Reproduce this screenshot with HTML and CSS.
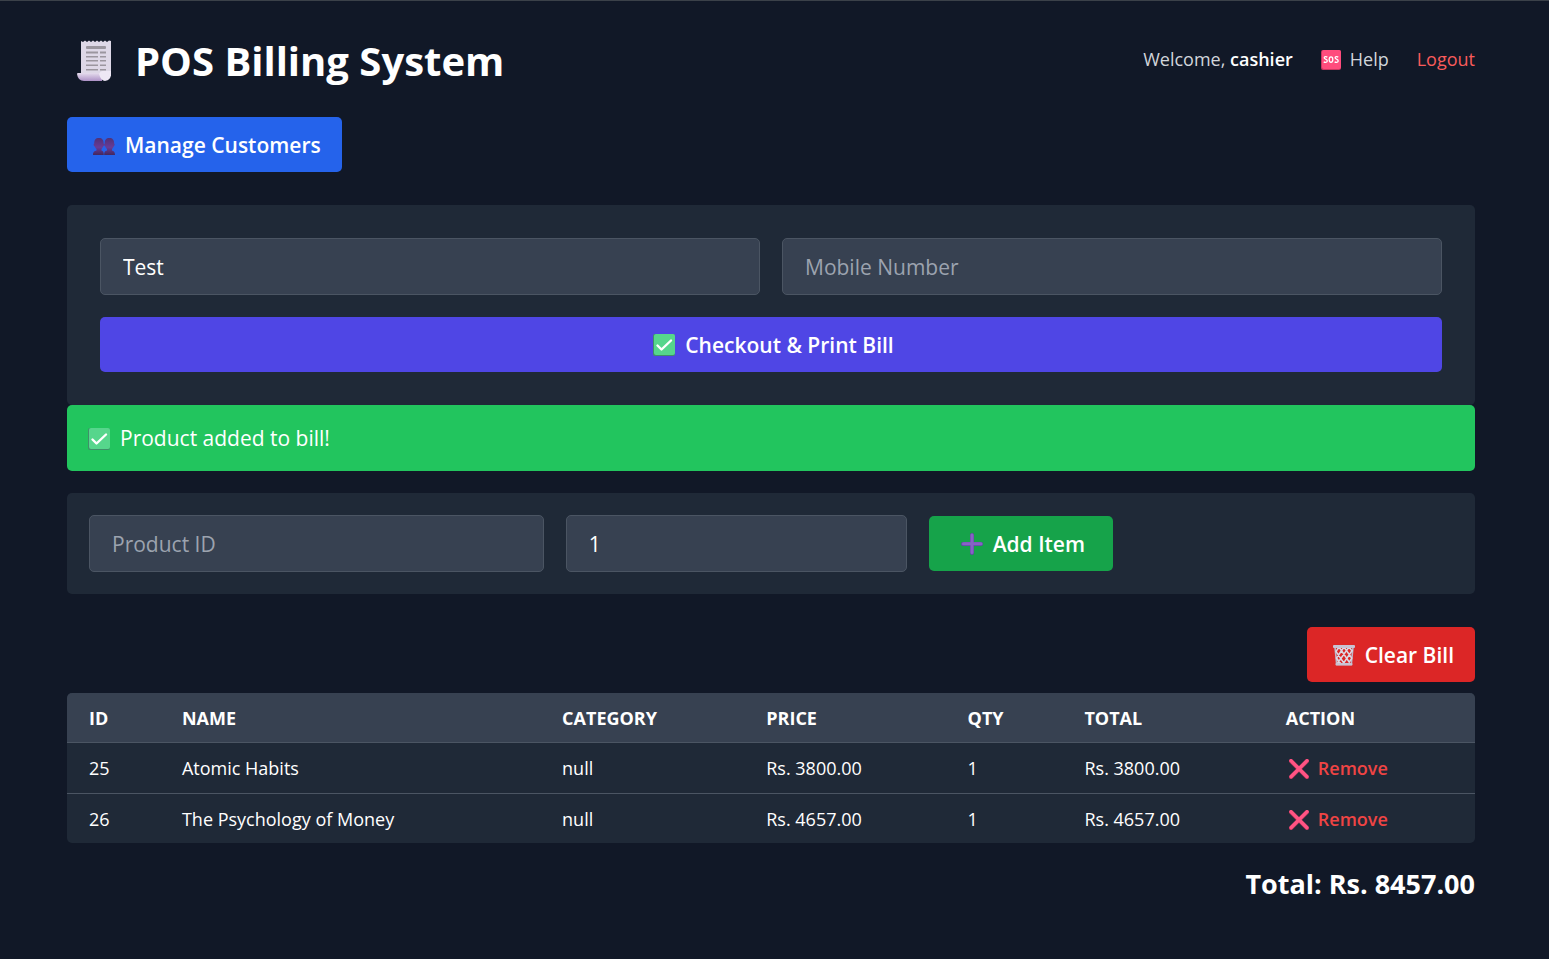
FILE: index.html
```html
<!DOCTYPE html>
<html lang="en">
<head>
<meta charset="utf-8">
<title>POS Billing System</title>
<link rel="stylesheet" href="styles.css">
</head>
<body>
<svg class="sprite" aria-hidden="true">
  <symbol id="check" viewBox="0 0 22 22">
    <rect width="22" height="22" rx="2" fill="#3f8f69"/>
    <rect x="1" width="21" height="21" rx="2" fill="#56d68c"/>
    <path d="M4.500 11.500 8.500 15.500 18 6.500" fill="none" stroke="#fff" stroke-width="2.400" stroke-linecap="round" stroke-linejoin="round"/>
  </symbol>
  <symbol id="cross" viewBox="0 0 20 20">
    <path d="M2 2 18 18M18 2 2 18" stroke="#c8385f" stroke-width="4" stroke-linecap="round"/>
    <path d="M2 1.700 17.800 17.500M18 1.700 2.200 17.500" stroke="#ff5484" stroke-width="3.300" stroke-linecap="round"/>
  </symbol>
</svg>
<main class="page">
  <header class="header">
    <h1 class="title">
      <svg class="receipt" viewBox="0 0 34 42" aria-hidden="true">
        <defs><linearGradient id="roll" x1="0" y1="0" x2="0" y2="1"><stop offset="0" stop-color="#e5dced"/><stop offset="1" stop-color="#ad91c6"/></linearGradient></defs>
        <path d="M4 1 6 2 8 .5 10 2 12 .5 14 2 16 .5 18 2 20 .5 22 2 24 .5 26 2 28 .5 30 2 32 .5 34 1V36H4Z" fill="#ded8e7"/>
        <path d="M0 34Q0 33 1 33H25V41H7Q1 41 0 34Z" fill="url(#roll)"/>
        <path d="M22 34Q24 41 28 41 34 40 34 34V31H29Q24 30 22 34Z" fill="#eee7f5"/>
        <g fill="#9b969f"><rect x="9" y="6" width="20" height="3" rx="1"/><path d="M9 11.500H21V13.500H9ZM23 11.500H29V13.500H23ZM9 16H21V17.500H9ZM23 16H29V17.500H23ZM9 20H21V21.500H9ZM23 20H29V21.500H23ZM9 24.500H21V26H9ZM23 24.500H29V26H23ZM9 29H21V30.500H9ZM23 29H29V30.500H23Z"/></g>
      </svg>
      <span>POS Billing System</span>
    </h1>
    <nav class="nav">
      <span>Welcome, <strong>cashier</strong></span>
      <a class="help" href="#help">
        <svg class="icon-sm" viewBox="0 0 20 20" aria-hidden="true"><rect width="20" height="20" rx="2" fill="#c93660"/><rect x="1" width="19" height="19" rx="2" fill="#ff4c7d"/><g fill="none" stroke="#fff" stroke-width="1.300"><path d="M6.300 7.200C5.500 6.400 3.300 6.300 3.200 7.800 3.200 9.500 6.300 8.900 6.300 11 6.200 12.700 3.700 12.700 2.800 11.700"/><ellipse cx="10" cy="9.600" rx="1.800" ry="2.800"/><path d="M17.200 7.200C16.400 6.400 14.200 6.300 14.100 7.800 14.100 9.500 17.200 8.900 17.200 11 17.100 12.700 14.600 12.700 13.700 11.700"/></g></svg>
        Help</a>
      <a class="logout" href="#logout">Logout</a>
    </nav>
  </header>

  <a class="btn btn-blue" href="#customers">
    <svg class="icon" viewBox="0 0 22 22" aria-hidden="true"><defs><linearGradient id="bust" x1="0" y1="0" x2="0" y2="1"><stop offset="0" stop-color="#513177"/><stop offset=".55" stop-color="#673c98"/><stop offset="1" stop-color="#43275e"/></linearGradient></defs><g fill="url(#bust)"><path d="M6 4C2.500 4 1.100 6 1.300 9.500 .2 9.500 .6 12.500 1.800 12.500 2.300 14 3 14.500 3.500 15V16.500C1.500 17 0 17.500 0 21H10.800C10.800 17.500 10 17 8.500 16.500V15C9 14.500 9.700 13.500 10.200 12.500 11.200 12 11.500 9.500 10.600 9.500 10.800 6 9 4 6 4Z"/><path d="M16.500 4C13 4 11.600 6 11.800 9.500 10.700 9.500 11.100 12.500 12.300 12.500 12.800 14 13.500 14.500 14 15V16.500C12 17 11.200 17.500 11.200 21H22C22 17.500 20.500 17 19 16.500V15C19.500 14.500 20.200 13.500 20.700 12.500 21.700 12 22 9.500 21.100 9.500 21.300 6 19.500 4 16.500 4Z"/></g></svg>
    Manage Customers</a>

  <form class="card checkout">
    <div class="pair">
      <input class="field" type="text" value="Test" aria-label="Customer Name">
      <input class="field" type="text" placeholder="Mobile Number" aria-label="Mobile Number">
    </div>
    <button class="btn btn-indigo" type="button"><svg class="icon"><use href="#check"/></svg>Checkout &amp; Print Bill</button>
  </form>

  <div class="alert" role="status"><svg class="icon"><use href="#check"/></svg>Product added to bill!</div>

  <form class="card add">
    <input class="field" type="text" placeholder="Product ID" aria-label="Product ID">
    <input class="field" type="text" inputmode="numeric" value="1" aria-label="Quantity">
    <button class="btn btn-green" type="button">
      <svg class="icon" viewBox="0 0 22 22" aria-hidden="true"><path d="M11 2V20M2 11H20" stroke="#6544a8" stroke-width="4" stroke-linecap="round"/><path d="M11 2V19.500M2.500 10.700H20" stroke="#8663c6" stroke-width="3" stroke-linecap="round"/></svg>
      Add Item</button>
  </form>

  <div class="actions">
    <button class="btn btn-red" type="button">
      <svg class="icon" viewBox="0 0 22 22" aria-hidden="true"><path d="M2 3 3.700 20.500H18.300L20 3" fill="none" stroke="#bcb7c8" stroke-width="1.600"/><path d="M6 3 3 7.500 11.500 20M11 3 3.500 14 8 20M16 3 4 20M19.500 6 10 20M19 14 15 20M16 3 19.500 7.500M11 3 19 14.500M6 3 17.500 20M3.500 14 7 20" fill="none" stroke="#dcd7e3" stroke-width="1.500"/><rect y="1" width="22" height="3" rx="1" fill="#c8c3d3"/><rect x="2.500" y="19" width="17" height="2.500" rx="1" fill="#c8c3d3"/></svg>
      Clear Bill</button>
  </div>

  <table class="bill">
    <colgroup><col class="c-id"><col class="c-name"><col class="c-category"><col class="c-money"><col class="c-qty"><col class="c-money"><col></colgroup>
    <thead>
      <tr><th>ID</th><th>NAME</th><th>CATEGORY</th><th>PRICE</th><th>QTY</th><th>TOTAL</th><th>ACTION</th></tr>
    </thead>
    <tbody>
      <tr><td>25</td><td>Atomic Habits</td><td>null</td><td>Rs. 3800.00</td><td>1</td><td>Rs. 3800.00</td><td><button class="remove" type="button"><svg class="icon-sm"><use href="#cross"/></svg>Remove</button></td></tr>
      <tr><td>26</td><td>The Psychology of Money</td><td>null</td><td>Rs. 4657.00</td><td>1</td><td>Rs. 4657.00</td><td><button class="remove" type="button"><svg class="icon-sm"><use href="#cross"/></svg>Remove</button></td></tr>
    </tbody>
  </table>

  <p class="total">Total: Rs. 8457.00</p>
</main>
</body>
</html>
```
FILE: styles.css
```css
* { box-sizing: border-box; }
body {
  margin: 0;
  min-height: 100vh;
  padding: 32px 74px 33px 67px;
  border-top: 1px solid #3b4149;
  background: #111827;
  color: #fff;
  font: 21px/33px "Open Sans", "Noto Sans", sans-serif;
}
.sprite { position: absolute; width: 0; height: 0; }
.page { max-width: 1408px; margin: 0 auto; }
.header {
  display: flex;
  justify-content: space-between;
  align-items: flex-start;
  margin-bottom: 28px;
}
.title {
  display: flex;
  align-items: center;
  gap: 24px;
  margin: 0;
  padding-left: 10px;
  font-size: 40px;
  line-height: 56px;
}
.receipt { width: 34px; height: 42px; }
.nav {
  display: flex;
  gap: 28px;
  padding-top: 10px;
  color: #d1d5db;
  font-size: 18px;
}
.nav strong { color: #fff; font-weight: 600; }
.nav a { color: inherit; text-decoration: none; }
.nav .logout { color: #f85b5b; }
.help { display: flex; align-items: center; gap: 9px; }
.icon { width: 22px; height: 22px; flex: none; }
.icon-sm { width: 20px; height: 20px; flex: none; }
.btn {
  display: inline-flex;
  align-items: center;
  justify-content: center;
  gap: 10px;
  height: 55px;
  padding: 1px 21px 0 26px;
  border: 0;
  border-radius: 5px;
  color: #fff;
  font: inherit;
  font-weight: 600;
  text-decoration: none;
  white-space: nowrap;
}
.btn-blue { display: flex; width: fit-content; margin-bottom: 33px; background: #2563eb; }
.btn-indigo { width: 100%; background: #4f46e5; }
.btn-green { padding: 1px 28px 0 32px; background: #16a34a; }
.btn-red { background: #dc2626; }
.card { border-radius: 5px; background: #1f2937; }
.checkout { padding: 33px; }
.pair {
  display: grid;
  grid-template-columns: 1fr 1fr;
  gap: 22px;
  margin-bottom: 22px;
}
.field {
  width: 100%;
  min-width: 0;
  height: 57px;
  padding: 0 22px;
  border: 1px solid #4b5563;
  border-radius: 5px;
  background: #374151;
  color: #fff;
  font: inherit;
}
.field::placeholder { color: #9ca3af; opacity: 1; }
.alert {
  display: flex;
  align-items: center;
  gap: 10px;
  margin-bottom: 22px;
  padding: 17px 21px 16px;
  border-radius: 5px;
  background: #22c55e;
}
.add {
  display: grid;
  grid-template-columns: calc(100% / 3) 25% 1fr;
  align-items: center;
  justify-items: start;
  gap: 22px;
  margin-bottom: 33px;
  padding: 22px;
}
.actions { display: flex; justify-content: flex-end; margin-bottom: 11px; }
.bill {
  width: 100%;
  table-layout: fixed;
  border-spacing: 0;
  overflow: hidden;
  border-radius: 5px;
  background: #1f2937;
  font-size: 18px;
  line-height: 27px;
  text-align: left;
}
.c-id { width: 6.6%; }
.c-name { width: 27%; }
.c-category { width: 14.5%; }
.c-money { width: 14.3%; }
.c-qty { width: 8.3%; }
.bill th, .bill td { padding: 12px 22px 10px; white-space: nowrap; }
.bill th { background: #374151; }
.bill td { padding-bottom: 11px; border-top: 1px solid #4b5563; }
.bill tbody tr:last-child td { padding-bottom: 10px; }
.remove {
  display: flex;
  align-items: center;
  gap: 9px;
  padding: 0 0 0 3px;
  border: 0;
  background: none;
  color: #ef4444;
  font: inherit;
  font-weight: 600;
}
.total {
  margin: 22px 0 0;
  font-size: 27px;
  font-weight: 700;
  line-height: 38px;
  text-align: right;
}
```
